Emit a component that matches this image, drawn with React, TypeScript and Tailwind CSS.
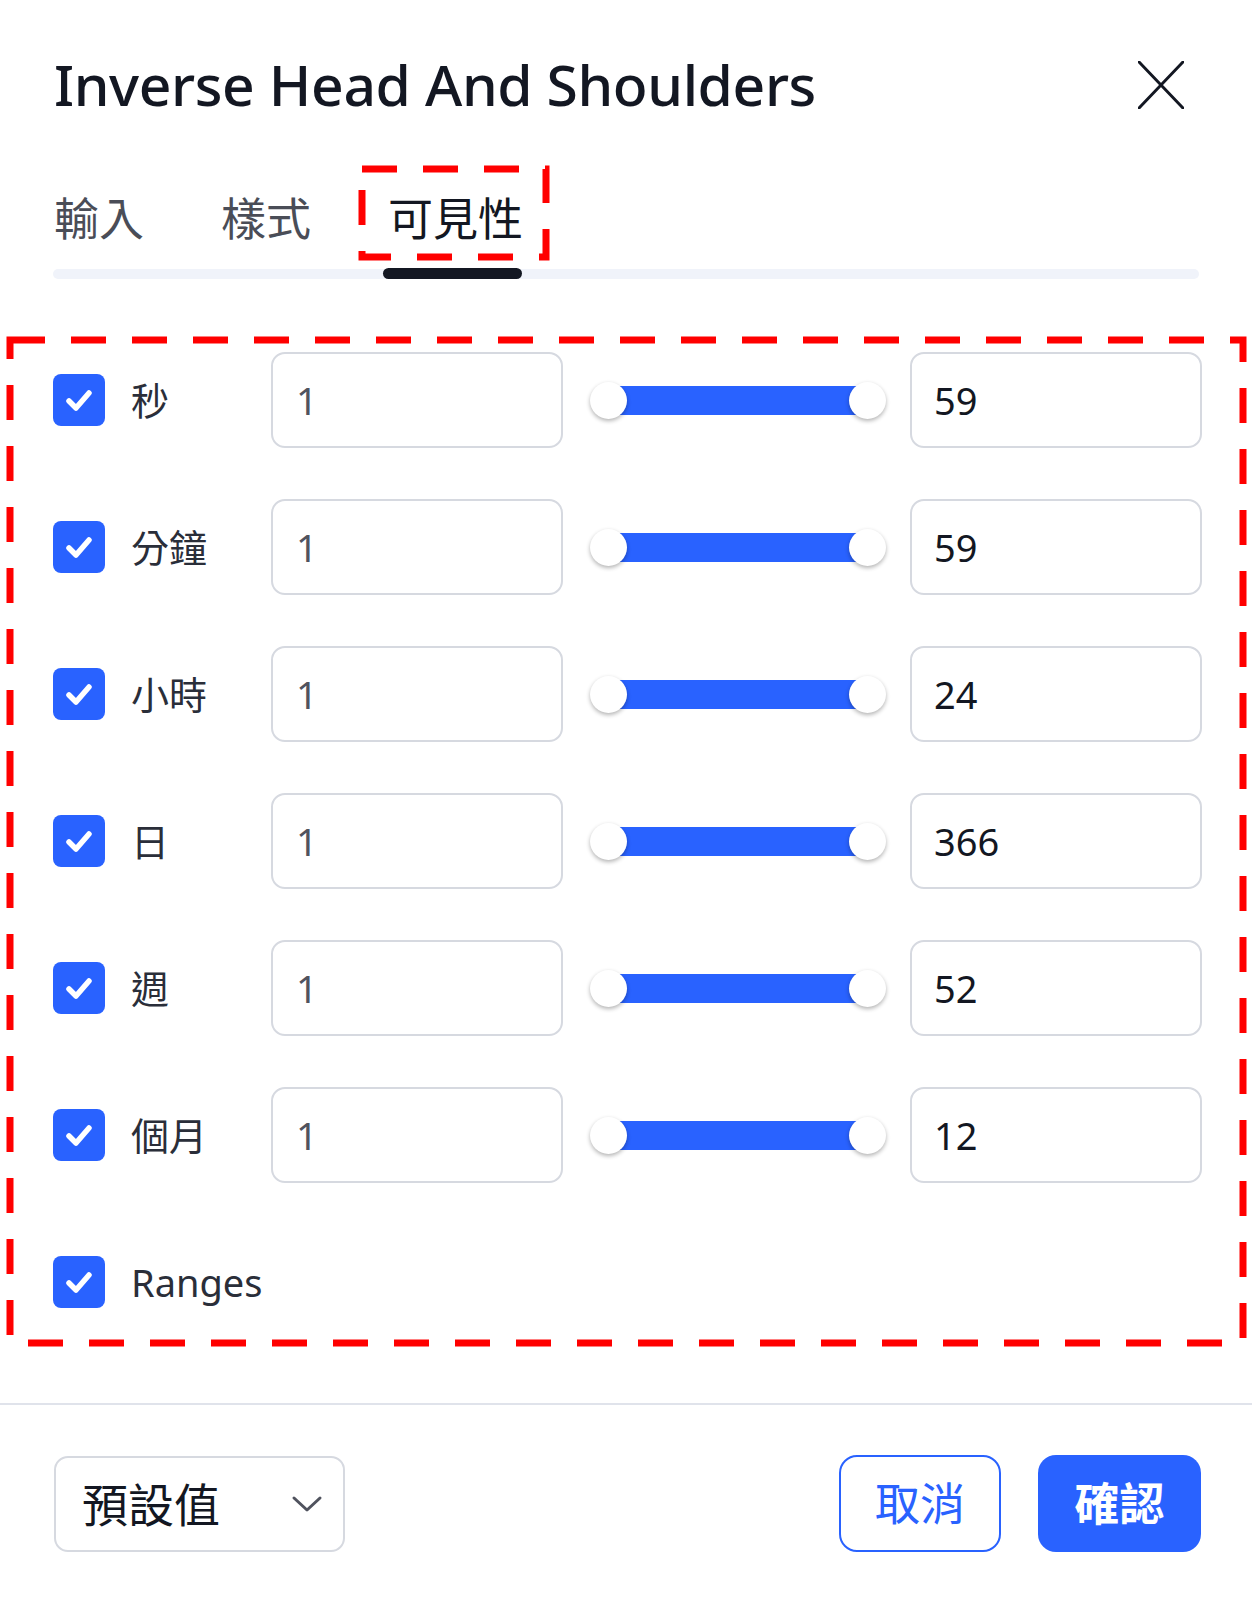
import React from "react";

const rows = [
  { label: "秒", max: "59" },
  { label: "分鐘", max: "59" },
  { label: "小時", max: "24" },
  { label: "日", max: "366" },
  { label: "週", max: "52" },
  { label: "個月", max: "12" },
];

function Check() {
  return (
    <div className="w-[52px] h-[52px] shrink-0 rounded-[8px] bg-[#2962ff] flex items-center justify-center">
      <svg width="52" height="52" viewBox="0 0 52 52">
        <path d="M16 27 L23 34 L36 19" fill="none" stroke="white" strokeWidth="5.5" strokeLinecap="round" strokeLinejoin="round" />
      </svg>
    </div>
  );
}

function Slider() {
  return (
    <div className="relative ml-[27px] w-[296px] h-[96px] flex items-center">
      <div className="absolute left-[19px] right-[19px] h-[29px] bg-[#2962ff]" />
      <div className="absolute left-0 w-[37px] h-[37px] rounded-full bg-white shadow-[0_2px_4px_rgba(0,0,0,0.3)]" />
      <div className="absolute right-0 w-[37px] h-[37px] rounded-full bg-white shadow-[0_2px_4px_rgba(0,0,0,0.3)]" />
    </div>
  );
}

export default function App() {
  return (
    <div className="relative w-[1252px] h-[1600px] bg-white overflow-hidden font-['Noto_Sans','Noto_Sans_CJK_TC',sans-serif] text-[#131722]">
      {/* Header */}
      <div className="flex items-start justify-between pl-[54px] pr-[68px] pt-[56px] h-[110px]">
        <div className="text-[57px] leading-none font-medium tracking-[-0.4px]">Inverse Head And Shoulders</div>
        <svg width="46" height="48" viewBox="0 0 46 48" className="mt-[5px]">
          <path d="M1 1 L45 47 M45 1 L1 47" stroke="#131722" strokeWidth="3" strokeLinecap="round" />
        </svg>
      </div>

      {/* Tabs */}
      <div className="px-[53px] mt-[83px]">
        <div className="flex gap-[77px] pl-[1px] text-[45px] leading-[52px]">
          <span className="text-[#4a4d57]">輸入</span>
          <span className="text-[#4a4d57]">樣式</span>
          <span className="text-[#131722]">可見性</span>
        </div>
        <div className="relative mt-[24px] h-[10px] rounded-full bg-[#f0f3fa]">
          <div className="absolute left-[330px] top-[-1px] w-[139px] h-[11px] rounded-full bg-[#131722]" />
        </div>
      </div>

      {/* Rows */}
      <div className="mt-[73px] pl-[53px] flex flex-col gap-[51px]">
        {rows.map((r) => (
          <div key={r.label} className="flex items-center h-[96px]">
            <Check />
            <div className="w-[166px] pl-[26px] text-[38px] leading-none text-[#2a2e39]">{r.label}</div>
            <div className="w-[292px] h-[96px] rounded-[14px] border-2 border-[#d6d9e0] flex items-center pl-[23px] text-[38px] text-[#50535e]">1</div>
            <Slider />
            <div className="ml-[24px] w-[292px] h-[96px] rounded-[14px] border-2 border-[#d6d9e0] flex items-center pl-[22px] text-[38px] text-[#131722]">{r.max}</div>
          </div>
        ))}
        <div className="flex items-center h-[96px]">
          <Check />
          <div className="pl-[26px] text-[38px] leading-none text-[#2a2e39]">Ranges</div>
        </div>
      </div>

      {/* Divider */}
      <div className="mt-[73px] h-[2px] bg-[#e0e3eb]" />

      {/* Footer */}
      <div className="mt-[50px] flex items-center justify-between pl-[54px] pr-[51px]">
        <div className="w-[291px] h-[96px] rounded-[14px] border-2 border-[#d6d9e0] flex items-center justify-between pl-[26px] pr-[20px]">
          <span className="text-[46px] leading-none text-[#131722]">預設值</span>
          <svg width="32" height="18" viewBox="0 0 32 18">
            <path d="M3 3 L16 15 L29 3" fill="none" stroke="#50535e" strokeWidth="3" strokeLinecap="round" strokeLinejoin="round" />
          </svg>
        </div>
        <div className="flex gap-[37px]">
          <div className="w-[162px] h-[97px] rounded-[18px] border-[2.5px] border-[#2962ff] flex items-center justify-center text-[45px] leading-none text-[#2962ff]">取消</div>
          <div className="w-[163px] h-[97px] rounded-[18px] bg-[#2962ff] flex items-center justify-center text-[45px] leading-none font-semibold text-white">確認</div>
        </div>
      </div>

      {/* Annotation overlay */}
      <svg className="absolute inset-0 pointer-events-none" width="1252" height="1600">
        <rect x="362" y="169" width="184" height="88" fill="none" stroke="#ff0000" strokeWidth="7" strokeDasharray="35 26" />
        <rect x="10" y="340" width="1233" height="1003" fill="none" stroke="#ff0000" strokeWidth="7" strokeDasharray="35 26" />
      </svg>
    </div>
  );
}
